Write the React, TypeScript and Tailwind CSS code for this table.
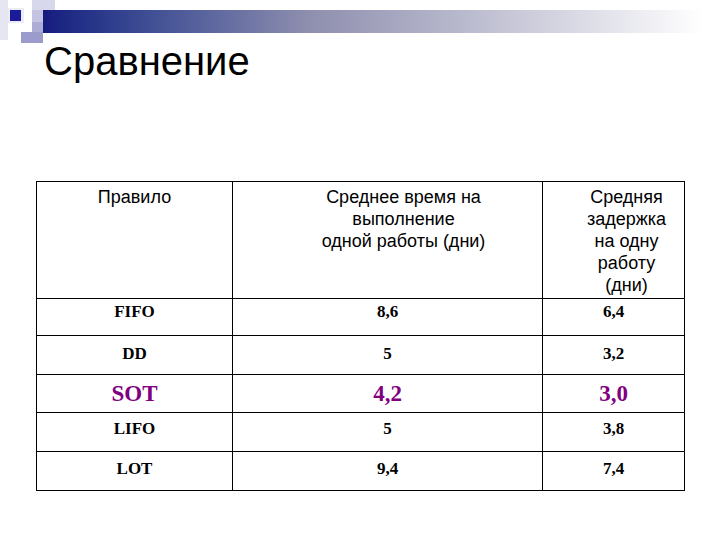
const rows = [
  { rule: 'FIFO', time: '8,6', delay: '6,4', h: 'h-[37px]', pt: 'pt-[4px]' },
  { rule: 'DD', time: '5', delay: '3,2', h: 'h-[39px]', pt: 'pt-[9px]' },
  { rule: 'SOT', time: '4,2', delay: '3,0', h: 'h-[38px]', pt: 'pt-[7px]', accent: true },
  { rule: 'LIFO', time: '5', delay: '3,8', h: 'h-[39px]', pt: 'pt-[7px]' },
  { rule: 'LOT', time: '9,4', delay: '7,4', h: 'h-[39px]', pt: 'pt-[8px]' },
];

function CornerMark() {
  return (
    <svg width="60" height="45" viewBox="0 0 60 45" className="absolute left-0 top-0">
      <rect x="0" y="0" width="8" height="40" fill="#e6e6f2" />
      <rect x="8" y="8" width="16" height="15" fill="#ececf6" />
      <rect x="10" y="10" width="11" height="11" fill="#1b1b9a" />
      <rect x="32" y="0" width="23" height="10" fill="#d8d8ec" />
      <rect x="32" y="10" width="11" height="12" fill="#c4c4e2" />
      <rect x="32" y="22" width="11" height="10" fill="#acacd4" />
      <rect x="21" y="32" width="22" height="11" fill="#9c9ccc" />
    </svg>
  );
}

export default function App() {
  return (
    <div className="relative w-[720px] h-[540px] bg-white overflow-hidden">
      <div className="absolute left-[43px] top-[10px] w-[660px] h-[23px] bg-gradient-to-r from-[#161b7f] via-[#8e8eae] via-40% to-white" />
      <CornerMark />

      <h1 className="pt-[41px] pl-[44px] text-[40px] leading-none text-black font-['Liberation_Sans',Arial,sans-serif]">
        Сравнение
      </h1>

      <table className="mt-[100px] ml-[36px] w-[649px] table-fixed border-collapse text-black">
        <colgroup>
          <col className="w-[196px]" />
          <col className="w-[310px]" />
          <col className="w-[142px]" />
        </colgroup>
        <thead>
          <tr className="h-[117px] font-['Liberation_Sans',Arial,sans-serif] text-[18px] leading-[22px]">
            <th className="border border-black align-top pt-[4px] text-center font-normal">Правило</th>
            <th className="border border-black align-top pt-[4px] pl-[32px] text-center font-normal">
              Среднее время на
              <br />
              выполнение
              <br />
              одной работы (дни)
            </th>
            <th className="border border-black align-top pt-[4px] pl-[26px] text-center font-normal">
              Средняя
              <br />
              задержка
              <br />
              на одну
              <br />
              работу
              <br />
              (дни)
            </th>
          </tr>
        </thead>
        <tbody className="font-['Liberation_Serif','Times_New_Roman',serif] font-bold">
          {rows.map((r) => (
            <tr
              key={r.rule}
              className={`${r.h} ${r.accent ? 'text-[23px] text-[#800080]' : 'text-[17px]'} leading-none`}
            >
              <td className={`border border-black align-top text-center ${r.pt}`}>{r.rule}</td>
              <td className={`border border-black align-top text-center ${r.pt}`}>{r.time}</td>
              <td className={`border border-black align-top text-center ${r.pt}`}>{r.delay}</td>
            </tr>
          ))}
        </tbody>
      </table>
    </div>
  );
}
